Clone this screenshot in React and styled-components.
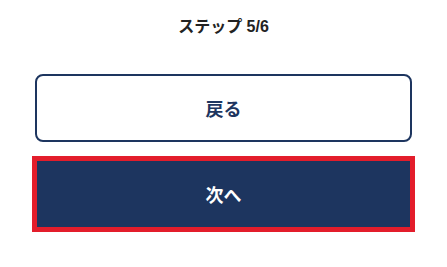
import React from "react";
import styled, { createGlobalStyle } from "styled-components";

const GlobalStyle = createGlobalStyle`
  html, body { margin: 0; padding: 0; background: #ffffff; }
  body { font-family: "Liberation Sans", "Noto Sans CJK JP", sans-serif; }
  * { box-sizing: border-box; }
`;

const Page = styled.div`
  width: 447px;
  height: 267px;
  padding: 0 35px;
  display: flex;
  flex-direction: column;
  background: #fff;
`;

const StepTitle = styled.div`
  height: 50px;
  display: flex;
  align-items: center;
  justify-content: center;
  font-size: 16px;
  font-weight: 700;
  color: #222222;
  margin-bottom: 24px;
`;

const Actions = styled.div`
  display: flex;
  flex-direction: column;
  gap: 17px;
`;

const Button = styled.button`
  width: 100%;
  height: ${(p) => (p.$primary ? "70px" : "68px")};
  display: flex;
  align-items: center;
  justify-content: center;
  font-family: "Liberation Sans", "Noto Sans CJK JP", sans-serif;
  font-size: 18px;
  font-weight: 700;
  cursor: pointer;
  border-radius: ${(p) => (p.$primary ? "0" : "8px")};
  border: 2px solid ${(p) => (p.$focused ? "#e31d2b" : "#1d355f")};
  background: ${(p) => (p.$primary ? "#1d355f" : "#ffffff")};
  color: ${(p) => (p.$primary ? "#ffffff" : "#1d355f")};
  box-shadow: ${(p) => (p.$focused ? "0 0 0 3px #e31d2b" : "none")};
  padding: 0;
`;

export default function App() {
  return (
    <>
      <GlobalStyle />
      <Page>
        <StepTitle>ステップ 5/6</StepTitle>
        <Actions>
          <Button>戻る</Button>
          <Button $primary $focused>次へ</Button>
        </Actions>
      </Page>
    </>
  );
}
